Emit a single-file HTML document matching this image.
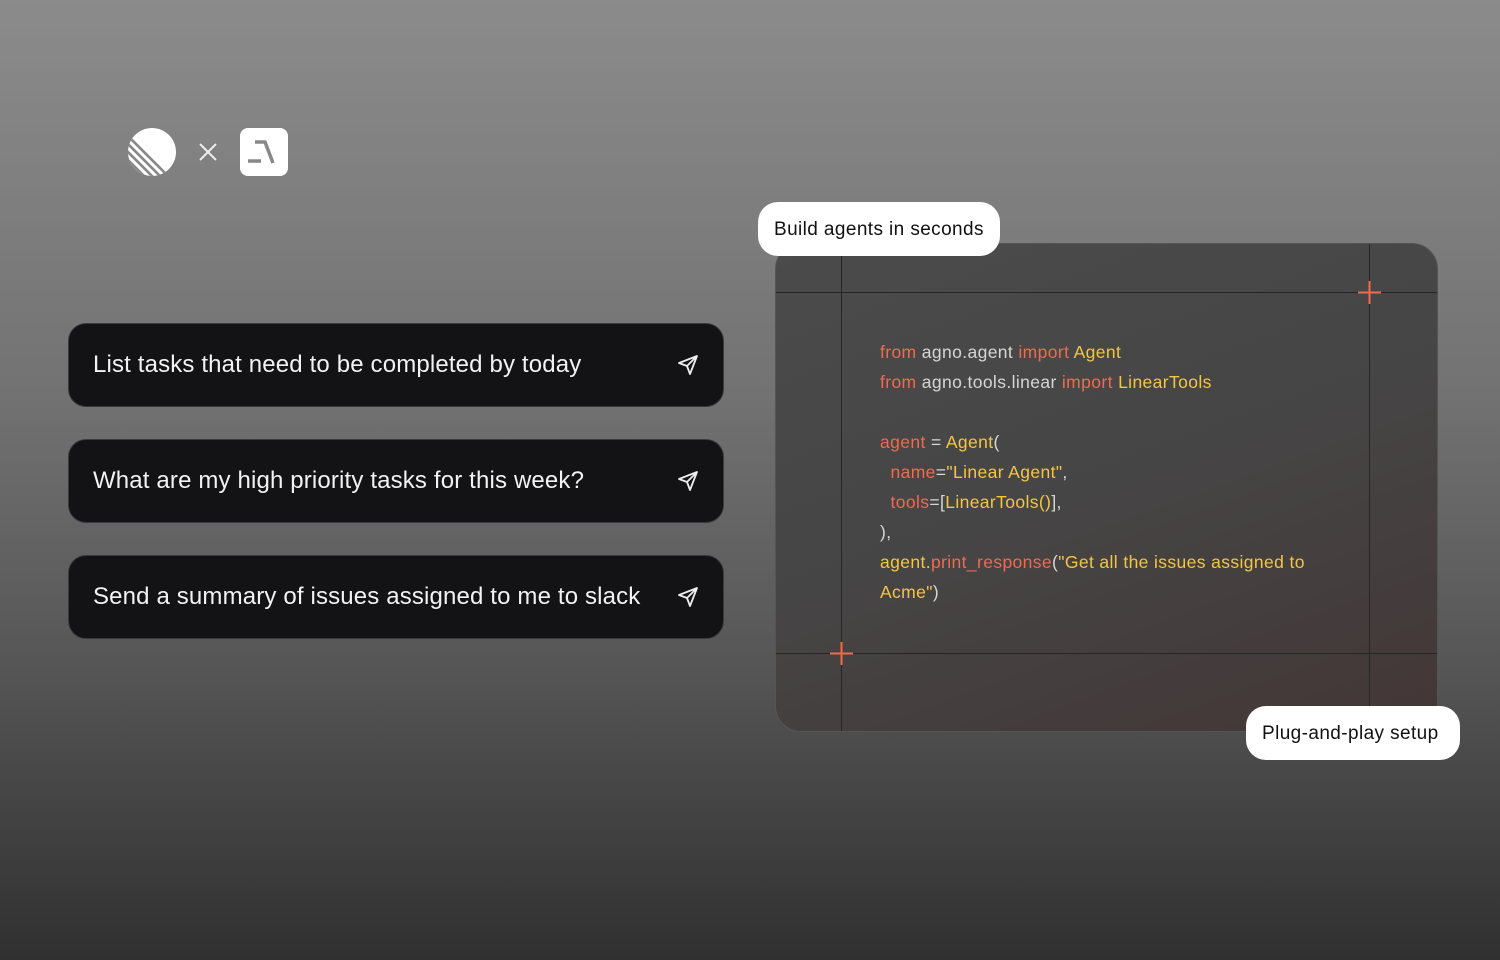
<!DOCTYPE html>
<html><head><style>
*{margin:0;padding:0;box-sizing:border-box}
body{width:1500px;height:960px;overflow:hidden;background:linear-gradient(180deg,#8b8b8b 0%,#737373 40%,#555 70%,#303030 100%);font-family:"Liberation Sans",sans-serif;position:relative}
.card{position:absolute;left:68px;width:656px;height:84px;background:#131315;border:1px solid #3a3a3c;border-radius:18px;color:#f2f2f2;font-size:24px;letter-spacing:0.15px;line-height:82px;padding-left:24px}
.card svg{position:absolute;right:24px;top:30px}
.panel{position:absolute;left:775px;top:243px;width:663px;height:489px;border-radius:26px;background:linear-gradient(160deg,#4b4b4b 0%,#464545 50%,#433636 100%);border:1px solid #555;overflow:hidden}
.vl{position:absolute;top:0;bottom:0;width:1px;background:#262626}
.hl{position:absolute;left:0;right:0;height:1px;background:#262626}
.code{position:absolute;left:104px;top:93px;font-size:17.5px;letter-spacing:0.38px;line-height:30px;color:#d6d6d6;white-space:pre}
.r{color:#f06a4f}.y{color:#f5c542}
.pill{position:absolute;background:#fff;border-radius:20px;color:#111;font-size:19px;letter-spacing:0.4px;height:54px;line-height:56px;padding:0 16px}
</style></head><body>
<svg style="position:absolute;left:128px;top:128px" width="48" height="48" viewBox="0 0 48 48">
<defs><clipPath id="c"><circle cx="24" cy="24" r="24"/></clipPath></defs>
<g clip-path="url(#c)">
<rect width="48" height="48" fill="#fff"/>
<g stroke="#888" stroke-width="2.6">
<path d="M-5 3L45 53M-5 11L37 53M-5 19L29 53M-5 27L21 53"/>
</g></g></svg>
<svg style="position:absolute;left:198px;top:142px" width="20" height="20"><path d="M2 2L18 18M18 2L2 18" stroke="#eee" stroke-width="2"/></svg>
<div style="position:absolute;left:240px;top:128px;width:48px;height:48px;background:#fff;border-radius:8px"></div>
<svg style="position:absolute;left:240px;top:128px" width="48" height="48"><path d="M8 33H21" stroke="#888" stroke-width="3.5"/><path d="M15 14H25L33 35" stroke="#888" stroke-width="3.5" fill="none"/></svg>

<div class="card" style="top:323px">List tasks that need to be completed by today<svg width="22" height="22" viewBox="0 0 22 22" fill="none" stroke="#eee" stroke-width="1.8" stroke-linejoin="round"><path d="M20 2L2 9l8 3 3 8z M20 2L10 12"/></svg></div>
<div class="card" style="top:439px">What are my high priority tasks for this week?<svg width="22" height="22" viewBox="0 0 22 22" fill="none" stroke="#eee" stroke-width="1.8" stroke-linejoin="round"><path d="M20 2L2 9l8 3 3 8z M20 2L10 12"/></svg></div>
<div class="card" style="top:555px">Send a summary of issues assigned to me to slack<svg width="22" height="22" viewBox="0 0 22 22" fill="none" stroke="#eee" stroke-width="1.8" stroke-linejoin="round"><path d="M20 2L2 9l8 3 3 8z M20 2L10 12"/></svg></div>

<div class="panel">
<div class="vl" style="left:65px"></div><div class="vl" style="left:593px"></div>
<div class="hl" style="top:48px"></div><div class="hl" style="top:409px"></div>
<svg style="position:absolute;left:582px;top:37px" width="23" height="23"><path d="M11.5 0V23M0 11.5H23" stroke="#f06a4f" stroke-width="2"/></svg>
<svg style="position:absolute;left:54px;top:398px" width="23" height="23"><path d="M11.5 0V23M0 11.5H23" stroke="#f06a4f" stroke-width="2"/></svg>
<div class="code"><span class="r">from</span> agno.agent <span class="r">import</span> <span class="y">Agent</span>
<span class="r">from</span> agno.tools.linear <span class="r">import</span> <span class="y">LinearTools</span>

<span class="r">agent</span> = <span class="y">Agent</span>(
  <span class="r">name</span>=<span class="y">"Linear Agent"</span>,
  <span class="r">tools</span>=[<span class="y">LinearTools()</span>],
),
<span class="y">agent.</span><span class="r">print_response</span>(<span class="y">"Get all the issues assigned to</span>
<span class="y">Acme"</span>)</div>
</div>
<div class="pill" style="left:758px;top:202px;width:242px">Build agents in seconds</div>
<div class="pill" style="left:1246px;top:706px;width:214px">Plug-and-play setup</div>
</body></html>
